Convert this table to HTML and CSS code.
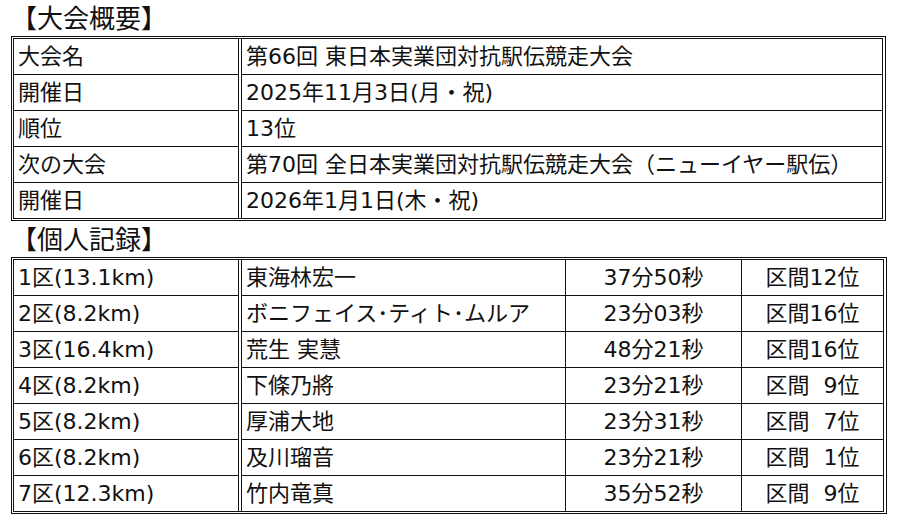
FILE: index.html
```html
<!DOCTYPE html>
<html lang="ja">
<head>
<meta charset="utf-8">
<title>大会概要</title>
<link rel="stylesheet" href="styles.css">
</head>
<body>
<div class="page">
  <h2 class="title">【大会概要】</h2>
  <div class="frame frame-info">
    <div class="grid info">
      <div class="cell c1">大会名</div><div class="cell c2">第66回 東日本実業団対抗駅伝競走大会</div>
      <div class="cell c1">開催日</div><div class="cell c2">2025年11月3日(月・祝)</div>
      <div class="cell c1">順位</div><div class="cell c2">13位</div>
      <div class="cell c1">次の大会</div><div class="cell c2">第70回 全日本実業団対抗駅伝競走大会（ニューイヤー駅伝）</div>
      <div class="cell c1 last">開催日</div><div class="cell c2 last">2026年1月1日(木・祝)</div>
    </div>
  </div>
  <h2 class="title">【個人記録】</h2>
  <div class="frame frame-rec">
    <div class="grid rec">
      <div class="cell c1">1区(13.1km)</div><div class="cell c2">東海林宏一</div><div class="cell c3">37分50秒</div><div class="cell c4">区間12位</div>
      <div class="cell c1">2区(8.2km)</div><div class="cell c2">ボニフェイス･ティト･ムルア</div><div class="cell c3">23分03秒</div><div class="cell c4">区間16位</div>
      <div class="cell c1">3区(16.4km)</div><div class="cell c2">荒生 実慧</div><div class="cell c3">48分21秒</div><div class="cell c4">区間16位</div>
      <div class="cell c1">4区(8.2km)</div><div class="cell c2">下條乃將</div><div class="cell c3">23分21秒</div><div class="cell c4">区間&#8199;9位</div>
      <div class="cell c1">5区(8.2km)</div><div class="cell c2">厚浦大地</div><div class="cell c3">23分31秒</div><div class="cell c4">区間&#8199;7位</div>
      <div class="cell c1">6区(8.2km)</div><div class="cell c2">及川瑠音</div><div class="cell c3">23分21秒</div><div class="cell c4">区間&#8199;1位</div>
      <div class="cell c1 last">7区(12.3km)</div><div class="cell c2 last">竹内竜真</div><div class="cell c3 last">35分52秒</div><div class="cell c4 last">区間&#8199;9位</div>
    </div>
  </div>
</div>
</body>
</html>
```
FILE: styles.css
```css
html, body {
  margin: 0;
  padding: 0;
  background: #fff;
}
body {
  font-family: "DejaVu Sans", "Noto Sans CJK JP", sans-serif;
  color: #111;
}
.page {
  padding-left: 11px;
  width: 876px;
}
.title {
  margin: 0;
  height: 36px;
  line-height: 38px;
  font-size: 26px;
  font-weight: normal;
  white-space: nowrap;
}
.frame {
  border: 1px solid #111;
  padding: 1px 2px 1px 1px;
}
.frame-info {
  width: 870px;
}
.frame-rec {
  width: 871px;
}
.grid {
  display: grid;
  border: 1px solid #111;
}
.info {
  grid-template-columns: 225px 2px 1fr;
}
.info .c1 { grid-column: 1; }
.info .c2 { grid-column: 3; }
.rec {
  grid-template-columns: 225px 2px 325px 176px 1fr;
}
.rec .c1 { grid-column: 1; }
.rec .c2 { grid-column: 3; }
.rec .c3 { grid-column: 4; }
.rec .c4 { grid-column: 5; }
.cell {
  height: 35px;
  line-height: 35px;
  font-size: 22px;
  padding-left: 4px;
  white-space: nowrap;
  border-bottom: 1px solid #111;
}
.cell.last {
  border-bottom: 0;
}
.c1 {
  border-right: 1px solid #111;
}
.c2 {
  border-left: 1px solid #111;
}
.rec .c2, .rec .c3 {
  border-right: 1px solid #111;
}
.c3, .c4 {
  text-align: center;
  padding-left: 0;
}
```
